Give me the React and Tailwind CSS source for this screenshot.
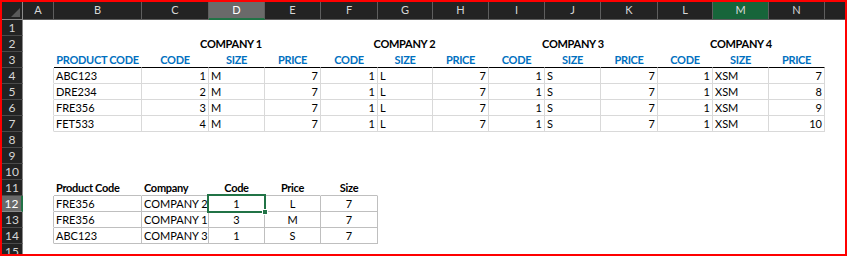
import React from "react";

const COLS = ["A", "B", "C", "D", "E", "F", "G", "H", "I", "J", "K", "L", "M", "N"];

const ALIGN = { l: "text-left", r: "text-right", c: "text-center" };

// border presets for sheet cells (right + bottom edges)
const EDGE = {
  none: "border-transparent",
  up: "border-[#d9d9d9]",
  upA: "border-transparent border-r-[#d9d9d9]",
  head: "border-transparent border-b-black",
  low: "border-[#bfbfbf]",
  lowA: "border-transparent border-r-[#bfbfbf]",
  lowHead: "border-transparent border-b-[#bfbfbf]",
};

const upper = [
  ["ABC123", "1", "M", "7", "1", "L", "7", "1", "S", "7", "1", "XSM", "7"],
  ["DRE234", "2", "M", "7", "1", "L", "7", "1", "S", "7", "1", "XSM", "8"],
  ["FRE356", "3", "M", "7", "1", "L", "7", "1", "S", "7", "1", "XSM", "9"],
  ["FET533", "4", "M", "7", "1", "L", "7", "1", "S", "7", "1", "XSM", "10"],
];

const lower = [
  ["FRE356", "COMPANY 2", "1", "L", "7"],
  ["FRE356", "COMPANY 1", "3", "M", "7"],
  ["ABC123", "COMPANY 3", "1", "S", "7"],
];

const empty = (n, e = "none") => Array.from({ length: n }, () => ({ t: "", e }));

function rowCells(r) {
  if (r === 2) {
    const co = (n) => ({ t: "COMPANY " + n, a: "c", bold: true, span: true });
    return [...empty(2), co(1), co(2), co(3), co(4), ...empty(1)];
  }
  if (r === 3) {
    const h = ["PRODUCT CODE", "CODE", "SIZE", "PRICE", "CODE", "SIZE", "PRICE", "CODE", "SIZE", "PRICE", "CODE", "SIZE", "PRICE"];
    return [...empty(1), ...h.map((t) => ({ t, a: "c", bold: true, blue: true, e: "head" })), ...empty(1)];
  }
  if (r >= 4 && r <= 7) {
    const d = upper[r - 4];
    return [
      { t: "", e: "upA" },
      ...d.map((t, i) => ({ t, a: i === 0 ? "l" : i % 3 === 2 ? "l" : "r", e: "up" })),
      ...empty(1),
    ];
  }
  if (r === 11) {
    const h = [["Product Code", "l"], ["Company", "l"], ["Code", "c"], ["Price", "c"], ["Size", "c"]];
    return [...empty(1), ...h.map(([t, a]) => ({ t, a, bold: true, e: "lowHead" })), ...empty(9)];
  }
  if (r >= 12 && r <= 14) {
    const d = lower[r - 12];
    return [
      { t: "", e: "lowA" },
      ...d.map((t, i) => ({ t, a: i < 2 ? "l" : "c", e: "low", sel: r === 12 && i === 2 })),
      ...empty(9),
    ];
  }
  return empty(15);
}

function ColHead({ c }) {
  if (c === "D")
    return (
      <div className="h-[18px] bg-[#6a6a6a] text-white border-r border-r-[#5e5e5e] border-b-2 border-b-[#217346] flex items-center justify-center">
        {c}
      </div>
    );
  if (c === "M")
    return (
      <div className="h-[18px] bg-[#17653a] text-[#dcdcdc] border-r border-b border-[#5e5e5e] flex items-center justify-center">
        {c}
      </div>
    );
  return (
    <div className="h-[18px] bg-[#232323] text-[#d6d6d6] border-r border-b border-[#5e5e5e] flex items-center justify-center">
      {c}
    </div>
  );
}

function RowHead({ r }) {
  if (r === 12)
    return (
      <div className="h-4 bg-[#6a6a6a] text-white border-b border-b-[#8a8a8a] border-r-2 border-r-[#217346] text-center leading-[15px] text-[12px]">
        {r}
      </div>
    );
  return (
    <div className="h-4 bg-[#232323] text-[#d6d6d6] border-b border-b-[#4a4a4a] border-r border-r-[#8a8a8a] text-center leading-[15px] text-[12px]">
      {r}
    </div>
  );
}

function Cell({ cell }) {
  return (
    <div
      className={`relative h-4 px-[2px] leading-[15px] whitespace-nowrap border-r border-b ${EDGE[cell.e || "none"]} ${ALIGN[cell.a || "l"]} ${cell.span ? "col-span-3" : ""} ${cell.bold ? "font-bold tracking-[-0.3px]" : ""} ${cell.blue ? "text-[#0070c0]" : "text-black"}`}
    >
      {cell.t}
      {cell.sel && (
        <div className="absolute -left-[2px] -top-[2px] w-[59px] h-[19px] border-2 border-[#217346] z-10">
          <div className="absolute -right-[4px] -bottom-[4px] w-[6px] h-[6px] bg-[#217346] border border-white" />
        </div>
      )}
    </div>
  );
}

export default function App() {
  const rows = Array.from({ length: 15 }, (_, i) => i + 1);
  return (
    <div className="w-[847px] h-[256px] border-2 border-[#ff0000] bg-white overflow-hidden font-[Lato,sans-serif] text-[11px]">
      <div className="grid grid-cols-[21px_31px_88px_67px_56px_56px_57px_55px_56px_56px_56px_57px_55px_56px_56px_20px]">
        {/* corner */}
        <div className="h-[18px] bg-[#232323] border-r border-b border-[#8a8a8a] flex items-end justify-end p-[2px]">
          <svg width="9" height="9" viewBox="0 0 9 9">
            <polygon points="9,0 9,9 0,9" fill="#5a5a5a" />
          </svg>
        </div>
        {COLS.map((c) => (
          <ColHead key={c} c={c} />
        ))}
        <div className="h-[18px] bg-[#232323] border-b border-[#5e5e5e]" />

        {rows.map((r) => (
          <React.Fragment key={r}>
            <RowHead r={r} />
            {rowCells(r).map((cell, i) => (
              <Cell key={i} cell={cell} />
            ))}
          </React.Fragment>
        ))}
      </div>
    </div>
  );
}
